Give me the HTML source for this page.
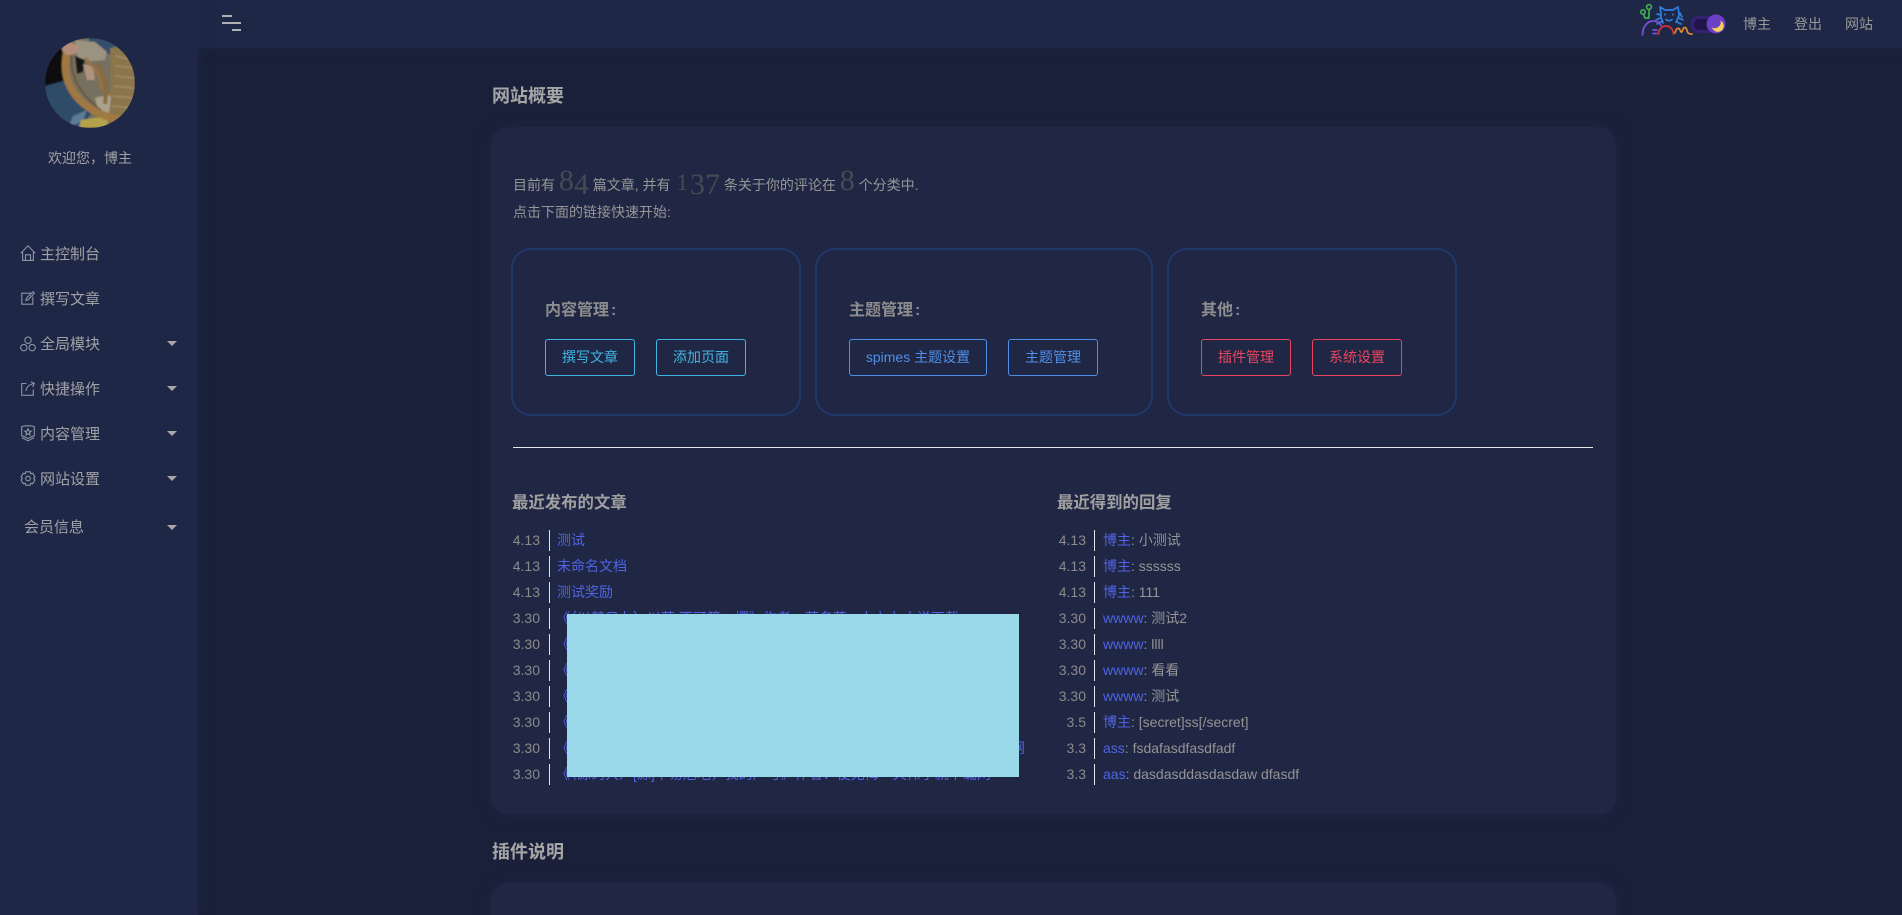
<!DOCTYPE html>
<html lang="zh-CN"><head><meta charset="utf-8"><title>网站概要</title>
<style>
html,body{margin:0;padding:0;width:1902px;height:915px;overflow:hidden;background:#1a203a}
body{position:relative;font-family:"Liberation Sans","Noto Sans CJK SC",sans-serif;font-size:14px;color:#9b9b9b}
.a{position:absolute;white-space:nowrap}
#side{position:absolute;left:0;top:0;width:198px;height:915px;background:#1f2746;box-shadow:3px 0 10px rgba(31,39,70,.5)}
#head{position:absolute;left:0;top:0;width:1902px;height:48px;background:#1f2746;box-shadow:0 2px 8px rgba(31,39,70,.5)}
.panel{position:absolute;left:491px;width:1125px;background:#202744;border-radius:18px;box-shadow:0 0 12px rgba(32,39,68,.9)}
.m{font-size:15px;color:#a0a2a6;line-height:20px;height:20px;left:40px}
.ic{position:absolute;fill:none;stroke:#8c95a3;stroke-width:1.1}
.car{position:absolute;left:167px;width:0;height:0;border-left:5px solid transparent;border-right:5px solid transparent;border-top:5px solid #a8a8a8}
h2{position:absolute;margin:0;font-size:18px;line-height:24px;font-weight:700;color:#a6a6a6;white-space:nowrap}
.card{position:absolute;top:248px;height:164px;border:2px solid #23386a;border-radius:20px;box-sizing:content-box}
.ct{position:absolute;top:300px;font-size:16px;line-height:22px;font-weight:700;color:#8e8e8e;white-space:nowrap}
.ct span{margin-left:2px}
.b{position:absolute;top:339px;height:37px;box-sizing:border-box;border:1px solid;border-radius:3px;text-align:center;line-height:35px;font-size:14px;white-space:nowrap}
.c1{color:#41b4e2;border-color:#41b4e2}.c2{color:#4f8fe8;border-color:#4f8fe8}.c3{color:#ea4560;border-color:#ea4560}
.h3{position:absolute;top:491px;font-size:16.4px;line-height:24px;font-weight:700;color:#a0a0a0;white-space:nowrap}
.d{position:absolute;width:34px;text-align:right;font-size:14px;line-height:21px;color:#8b8b8b}
.bar{position:absolute;width:1px;height:21px;background:#e4e4e4}
.t{position:absolute;font-size:14px;line-height:21px;color:#949494;white-space:nowrap}
.t i{font-style:normal;color:#4f63e6}
.n{font-family:"Liberation Serif",serif;font-size:30px;line-height:0;color:#474a55}
.n span{position:relative;top:4px}
.n b{font-weight:400;font-size:23px;padding:0 2px}
</style></head><body>

<div class="panel" style="top:127px;height:688px"></div>
<div class="panel" style="top:883px;height:60px"></div>

<div id="head"></div>
<div id="side"></div>

<!-- avatar -->
<svg class="a" style="left:45px;top:38px" width="90" height="90" viewBox="0 0 90 90">
<defs><clipPath id="cp"><circle cx="45" cy="45" r="45"/></clipPath><filter id="bl"><feGaussianBlur stdDeviation=".8"/></filter></defs>
<g clip-path="url(#cp)"><g filter="url(#bl)">
<rect width="90" height="90" fill="#8c8672"/>
<rect x="44" y="0" width="26" height="16" fill="#3c5d85"/>
<path d="M30 2L50 4L62 14L60 22L40 24L32 18Z" fill="#bdb39c"/>
<path d="M30 18L40 22L38 34L32 36Z" fill="#1a1613"/>
<path d="M38 26L48 28L50 42L42 42Z" fill="#d6b39a"/>
<path d="M50 60L66 56L68 80L54 76Z" fill="#cfc6ae"/>
<path d="M0 42L22 40L28 60L46 76L40 84L30 90L10 78L0 60Z" fill="#35597f"/>
<path d="M0 0H22L22 42L0 48Z" fill="#0c0a09"/>
<path d="M28 78L42 72L38 84L24 88Z" fill="#6f95b5"/>
<path d="M36 82L62 78L68 90H34Z" fill="#dcc55a"/>
<path d="M65 10L90 6V90H62L66 60Z" fill="#a98d5c"/>
<path d="M70 18L88 22M70 28L90 30M70 38L90 40M69 48L90 50M68 58L90 60M67 68L90 70" stroke="#c4ab7c" stroke-width="1.500" fill="none"/>
<path d="M22 13C19 28 20 40 27 52C34 64 50 78 78 82" stroke="#c4914f" stroke-width="7.500" fill="none"/>
<path d="M27 15C24 36 34 56 56 72" stroke="#7a5428" stroke-width="1.200" fill="none"/>
<path d="M40 20C48 28 53 34 55 42C56 50 57 55 67 57" stroke="#b98b4a" stroke-width="3" fill="none"/>
<path d="M52 26C60 36 62 48 60 66" stroke="#a5814a" stroke-width="4" fill="none"/>
<ellipse cx="25" cy="11" rx="8" ry="6" fill="#dcaa94"/>
<rect width="90" height="90" fill="#141210" opacity=".2"/>
</g></g></svg>
<div class="a" style="left:48px;top:148px;width:84px;font-size:14px;line-height:20px;color:#a0a2a6">欢迎您，博主</div>

<!-- side menu -->
<svg class="ic" style="left:20px;top:245px" width="16" height="16" viewBox="0 0 16 16"><path d="M.7 8.200L8 .8l7.300 7.400M2.600 7v8.400h10.800V7M5.500 15.400V9.800h5v5.600"/></svg>
<div class="a m" style="top:244.500px">主控制台</div>
<svg class="ic" style="left:21px;top:291px" width="14" height="14" viewBox="0 0 14 14"><path d="M10 2.200H.8v11h11V5.600M5 9.400l.6-2.400L12 .8l1.400 1.400L7.200 8.600z"/></svg>
<div class="a m" style="top:289.500px">撰写文章</div>
<svg class="ic" style="left:20px;top:336px" width="16" height="16" viewBox="0 0 16 16"><circle cx="8" cy="4.200" r="3.200"/><circle cx="3.800" cy="11.600" r="3.200"/><circle cx="12.200" cy="11.600" r="3.200"/></svg>
<div class="a m" style="top:334.500px">全局模块</div><div class="car" style="top:341px"></div>
<svg class="ic" style="left:21px;top:381px" width="14" height="15" viewBox="0 0 14 15"><path d="M5.500 2.500H.7v11.800h11.600V8.500M5 10C5.400 6 8 3.500 13 2.500M9.800.7L13.300 2.400 11.800 6"/></svg>
<div class="a m" style="top:379.500px">快捷操作</div><div class="car" style="top:386px"></div>
<svg class="ic" style="left:21px;top:425px" width="14" height="17" viewBox="0 0 14 17"><path d="M.7 1.500Q7 .2 13.300 1.500V10.500L7 13.500.7 10.500ZM.7 12.500L7 15.800l6.300-3.300M7 3.800l1 2.200 2.200.2-1.700 1.500.5 2.200L7 8.800 5 9.900l.5-2.200L3.800 6.200 6 6z"/></svg>
<div class="a m" style="top:424.500px">内容管理</div><div class="car" style="top:431px"></div>
<svg class="ic" style="left:20px;top:471px" width="16" height="15" viewBox="0 0 16 15"><path d="M5.800.8h4.400l.6 1.900 1.900-.4 2.200 3.700-1.300 1.500 1.300 1.500-2.200 3.700-1.900-.4-.6 1.900H5.800l-.6-1.900-1.900.4L1.100 9l1.300-1.500L1.100 6l2.200-3.700 1.900.4z"/><circle cx="8" cy="7.500" r="2.300"/></svg>
<div class="a m" style="top:469.500px">网站设置</div><div class="car" style="top:476px"></div>
<div class="a m" style="top:518px;left:24px">会员信息</div><div class="car" style="top:525px"></div>

<!-- header -->
<div class="a" style="left:222px;top:15px;width:10px;height:2px;background:#b0b0b4"></div>
<div class="a" style="left:222px;top:22px;width:19px;height:2px;background:#b0b0b4"></div>
<div class="a" style="left:232px;top:29px;width:9px;height:2px;background:#b0b0b4"></div>

<svg class="a" style="left:1630px;top:0" width="100" height="40" viewBox="0 0 100 40" fill="none" stroke-linecap="round" stroke-linejoin="round">
<rect x="60" y="16" width="30" height="17" rx="8.500" fill="#34206e"/>
<rect x="64" y="19" width="20" height="11" rx="5.500" fill="#1f1548"/>
<g stroke="#3fae4e" stroke-width="1.700"><circle cx="19" cy="7" r="2.400"/><circle cx="13" cy="12" r="2.200"/><path d="M19 9.500V18H15L13.500 14.200"/></g>
<g stroke="#2f7fe0" stroke-width="1.700"><path d="M30 7L35 10H43L48 7L49 14C49 17 47 20 46 22M30 7L31 14C30 18 33 21 33 23M27 14L31 15M26 20L30 18M27 24L32 21M50 13L52 17M49 18L53 20M47 22L51 24"/><path d="M36 19.500Q39 22 42 19.500"/></g>
<circle cx="35" cy="14.500" r="1" fill="#2f7fe0"/><circle cx="43" cy="14.500" r="1" fill="#2f7fe0"/>
<g stroke="#7a4fd0" stroke-width="1.800"><path d="M12.500 35C12.500 26 18 21 23 21C27 21 30 23 31 25.500M23 30H27M23 33.500H27"/></g>
<path d="M28.500 34C29 28 33 26 36 26C40 26 43 29 43.500 34" stroke="#d0303c" stroke-width="1.800"/>
<path d="M45 33C46 28 49 27 50 30C51 33 52 33 53 29C54 26 57 28 57 31C58 34 60 34 62 34" stroke="#e58a35" stroke-width="1.700"/>
<circle cx="86" cy="24" r="9.500" fill="#6c41c6"/>
<path d="M90.500 20.500A6 6 0 1 1 82 27.500A6 6 0 0 0 90.500 20.500Z" fill="#f6d258"/>
</svg>
<div class="a" style="left:1743px;top:14px;line-height:20px;color:#999">博主</div>
<div class="a" style="left:1794px;top:14px;line-height:20px;color:#999">登出</div>
<div class="a" style="left:1845px;top:14px;line-height:20px;color:#999">网站</div>

<!-- main -->
<h2 style="left:492px;top:84px">网站概要</h2>
<div class="a" style="left:513px;top:172px;line-height:27px;color:#969696">目前有 <span class="n">8<span>4</span></span> 篇文章, 并有 <span class="n"><b>1</b><span>3</span><span>7</span></span> 条关于你的评论在 <span class="n">8</span> 个分类中.<br>点击下面的链接快速开始:</div>

<div class="card" style="left:511px;width:286px"></div>
<div class="card" style="left:815px;width:334px"></div>
<div class="card" style="left:1167px;width:286px"></div>
<div class="ct" style="left:545px">内容管理<span>:</span></div>
<div class="ct" style="left:849px">主题管理<span>:</span></div>
<div class="ct" style="left:1201px">其他<span>:</span></div>
<div class="b c1" style="left:545px;width:90px">撰写文章</div>
<div class="b c1" style="left:656px;width:90px">添加页面</div>
<div class="b c2" style="left:849px;width:138px">spimes 主题设置</div>
<div class="b c2" style="left:1008px;width:90px">主题管理</div>
<div class="b c3" style="left:1201px;width:90px">插件管理</div>
<div class="b c3" style="left:1312px;width:90px">系统设置</div>

<div class="a" style="left:513px;top:447px;width:1080px;height:1px;background:#e6e6e6"></div>

<div class="h3" style="left:512px;top:491px">最近发布的文章</div>
<div class="h3" style="left:1057px;top:491px">最近得到的回复</div>

<div class="d" style="left:506px;top:530px">4.13</div><div class="bar" style="left:549px;top:530px"></div><div class="t" style="left:557px;top:530px"><i>测试</i></div>
<div class="d" style="left:506px;top:556px">4.13</div><div class="bar" style="left:549px;top:556px"></div><div class="t" style="left:557px;top:556px"><i>未命名文档</i></div>
<div class="d" style="left:506px;top:582px">4.13</div><div class="bar" style="left:549px;top:582px"></div><div class="t" style="left:557px;top:582px"><i>测试奖励</i></div>
<div class="d" style="left:506px;top:608px">3.30</div><div class="bar" style="left:549px;top:608px"></div><div class="t" style="left:556px;top:608px"><i>《（以某日九）以草 不可第，撰》作者：草名蓬一九七七小说下载</i></div>
<div class="d" style="left:506px;top:634px">3.30</div><div class="bar" style="left:549px;top:634px"></div><div class="t" style="left:556px;top:634px"><i>《</i></div>
<div class="d" style="left:506px;top:660px">3.30</div><div class="bar" style="left:549px;top:660px"></div><div class="t" style="left:556px;top:660px"><i>《</i></div>
<div class="d" style="left:506px;top:686px">3.30</div><div class="bar" style="left:549px;top:686px"></div><div class="t" style="left:556px;top:686px"><i>《</i></div>
<div class="d" style="left:506px;top:712px">3.30</div><div class="bar" style="left:549px;top:712px"></div><div class="t" style="left:556px;top:712px"><i>《</i></div>
<div class="d" style="left:506px;top:738px">3.30</div><div class="bar" style="left:549px;top:738px"></div><div class="t" style="left:556px;top:738px"><i>《</i></div><div class="t" style="left:1011px;top:738px"><i>网</i></div>
<div class="d" style="left:506px;top:764px">3.30</div><div class="bar" style="left:549px;top:764px"></div><div class="t" style="left:556px;top:764px"><i>《（源码大）[源]中易危地，我的产亏》作者：使无悔一天伟了就下载网</i></div>

<div class="a" style="left:567px;top:614px;width:452px;height:163px;background:#99d9ea"></div>

<div class="d" style="left:1052px;top:530px">4.13</div><div class="bar" style="left:1094px;top:530px"></div><div class="t" style="left:1103px;top:530px"><i>博主</i>: 小测试</div>
<div class="d" style="left:1052px;top:556px">4.13</div><div class="bar" style="left:1094px;top:556px"></div><div class="t" style="left:1103px;top:556px"><i>博主</i>: ssssss</div>
<div class="d" style="left:1052px;top:582px">4.13</div><div class="bar" style="left:1094px;top:582px"></div><div class="t" style="left:1103px;top:582px"><i>博主</i>: 111</div>
<div class="d" style="left:1052px;top:608px">3.30</div><div class="bar" style="left:1094px;top:608px"></div><div class="t" style="left:1103px;top:608px"><i>wwww</i>: 测试2</div>
<div class="d" style="left:1052px;top:634px">3.30</div><div class="bar" style="left:1094px;top:634px"></div><div class="t" style="left:1103px;top:634px"><i>wwww</i>: llll</div>
<div class="d" style="left:1052px;top:660px">3.30</div><div class="bar" style="left:1094px;top:660px"></div><div class="t" style="left:1103px;top:660px"><i>wwww</i>: 看看</div>
<div class="d" style="left:1052px;top:686px">3.30</div><div class="bar" style="left:1094px;top:686px"></div><div class="t" style="left:1103px;top:686px"><i>wwww</i>: 测试</div>
<div class="d" style="left:1052px;top:712px">3.5</div><div class="bar" style="left:1094px;top:712px"></div><div class="t" style="left:1103px;top:712px"><i>博主</i>: [secret]ss[/secret]</div>
<div class="d" style="left:1052px;top:738px">3.3</div><div class="bar" style="left:1094px;top:738px"></div><div class="t" style="left:1103px;top:738px"><i>ass</i>: fsdafasdfasdfadf</div>
<div class="d" style="left:1052px;top:764px">3.3</div><div class="bar" style="left:1094px;top:764px"></div><div class="t" style="left:1103px;top:764px"><i>aas</i>: dasdasddasdasdaw dfasdf</div>

<h2 style="left:492px;top:840px">插件说明</h2>
</body></html>
